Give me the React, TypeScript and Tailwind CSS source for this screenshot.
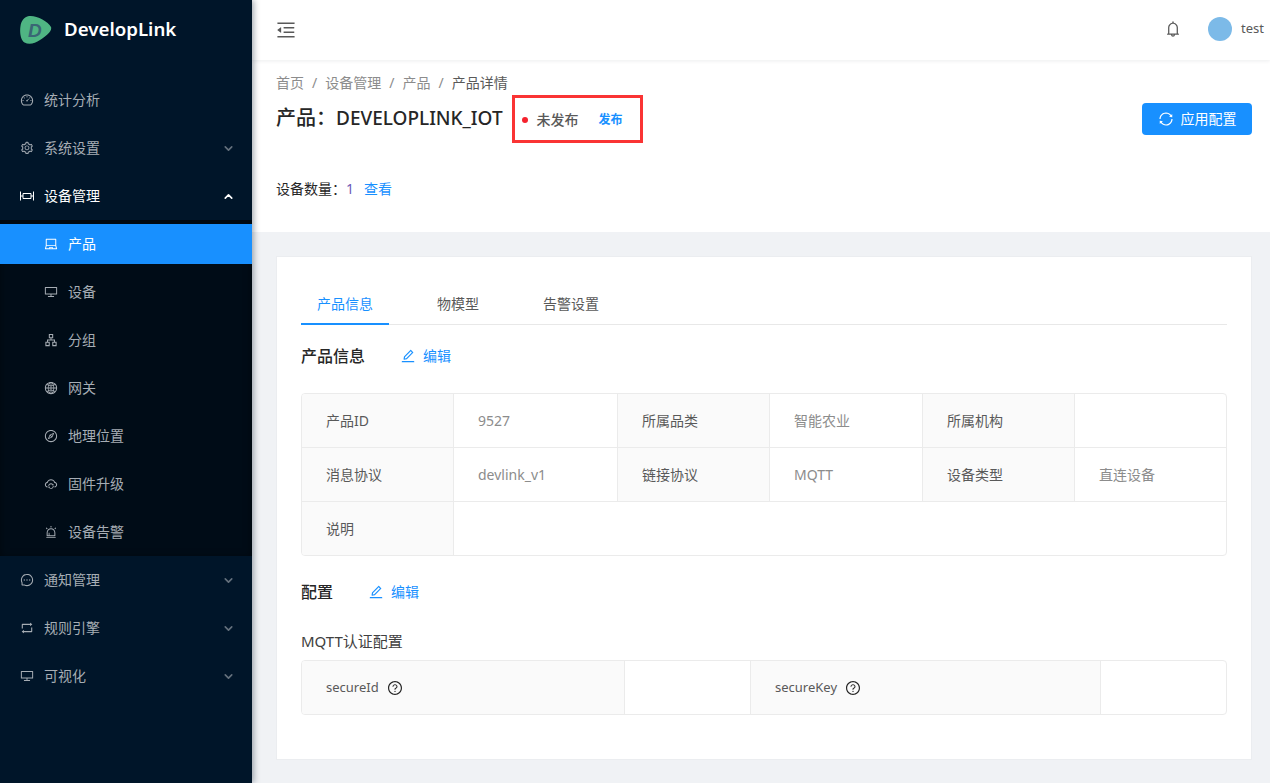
import type { ReactNode } from 'react';
import {
  AiOutlineAlert,
  AiOutlineApartment,
  AiOutlineBell,
  AiOutlineCloudSync,
  AiOutlineCompass,
  AiOutlineDashboard,
  AiOutlineDesktop,
  AiOutlineEdit,
  AiOutlineGlobal,
  AiOutlineLaptop,
  AiOutlineMenuFold,
  AiOutlineMessage,
  AiOutlineQuestionCircle,
  AiOutlineRetweet,
  AiOutlineSetting,
  AiOutlineSync,
} from 'react-icons/ai';
import { LuChevronDown, LuChevronUp } from 'react-icons/lu';

const fontStack =
  "font-['Noto_Sans','Noto_Sans_CJK_SC','Liberation_Sans',sans-serif]";

function DeviceIcon() {
  return (
    <svg width="14" height="14" viewBox="0 0 14 14" fill="none" stroke="currentColor">
      <path d="M.5 2.500v9M13.500 2.500v9M3 4.500h8v5H3zM.5 7H3M11 7h2.500" />
    </svg>
  );
}

function Logo() {
  return (
    <svg width="33" height="30" viewBox="0 0 33 30">
      <path
        d="M10 1C17 0 29 6 32 12c1.500 4-5 9-11 13-5 3.500-11 5-15.500 2.500C1.500 25 .5 17 1.500 11 2.200 6 5 2 10 1z"
        fill="#4fb583"
      />
      <text
        x="9"
        y="22"
        fontSize="19"
        fontWeight="700"
        fontStyle="italic"
        fill="#3a6675"
        fontFamily="Liberation Sans, sans-serif"
      >
        D
      </text>
    </svg>
  );
}

function MenuRow({
  icon,
  label,
  arrow,
  open = false,
}: {
  icon: ReactNode;
  label: string;
  arrow?: 'up' | 'down';
  open?: boolean;
}) {
  return (
    <div
      className={[
        'my-1 flex h-10 items-center pl-5 pr-[17px] text-sm',
        open ? 'text-white' : 'text-[#a6adb4]',
      ].join(' ')}
    >
      <span className="mr-[10px] flex w-[14px] justify-center text-base">{icon}</span>
      <span className="flex-1">{label}</span>
      {arrow === 'down' && <LuChevronDown size={13} strokeWidth={3} className="opacity-60" />}
      {arrow === 'up' && <LuChevronUp size={13} strokeWidth={3} />}
    </div>
  );
}

function SubRow({
  icon,
  label,
  active = false,
}: {
  icon: ReactNode;
  label: string;
  active?: boolean;
}) {
  return (
    <div
      className={[
        'my-1 flex h-10 items-center pl-11 text-sm',
        active ? 'bg-[#1890ff] text-white' : 'text-[#a6adb4]',
      ].join(' ')}
    >
      <span className="mr-[10px] flex w-[14px] justify-center text-base">{icon}</span>
      <span>{label}</span>
    </div>
  );
}

function Sidebar() {
  return (
    <aside className="z-10 w-[252px] shrink-0 bg-[#001529] shadow-[2px_0_6px_rgba(0,21,41,0.35)]">
      <div className="flex h-[60px] items-center pl-[19px]">
        <Logo />
        <span className="mb-[2px] ml-3 text-[18.7px] font-semibold text-white">DevelopLink</span>
      </div>
      <nav className="flex flex-col pt-4">
        <MenuRow icon={<AiOutlineDashboard />} label="统计分析" />
        <MenuRow icon={<AiOutlineSetting />} label="系统设置" arrow="down" />
        <MenuRow icon={<DeviceIcon />} label="设备管理" arrow="up" open />
        <div className="flex flex-col bg-[#000c17] shadow-[inset_0_2px_8px_rgba(0,0,0,0.45)]">
          <SubRow icon={<AiOutlineLaptop />} label="产品" active />
          <SubRow icon={<AiOutlineDesktop />} label="设备" />
          <SubRow icon={<AiOutlineApartment size={14} />} label="分组" />
          <SubRow icon={<AiOutlineGlobal />} label="网关" />
          <SubRow icon={<AiOutlineCompass />} label="地理位置" />
          <SubRow icon={<AiOutlineCloudSync />} label="固件升级" />
          <SubRow icon={<AiOutlineAlert />} label="设备告警" />
        </div>
        <MenuRow icon={<AiOutlineMessage />} label="通知管理" arrow="down" />
        <MenuRow icon={<AiOutlineRetweet />} label="规则引擎" arrow="down" />
        <MenuRow icon={<AiOutlineDesktop />} label="可视化" arrow="down" />
      </nav>
    </aside>
  );
}

function TopBar() {
  return (
    <header className="z-[5] flex h-[60px] shrink-0 items-center bg-white pl-[23px] pr-[6px] shadow-[0_1px_4px_rgba(0,21,41,0.08)]">
      <AiOutlineMenuFold size={22} className="text-[#595959]" />
      <div className="flex-1" />
      <AiOutlineBell size={18} className="mb-[2px] mr-[26px] text-[#595959]" />
      <span className="mb-[2px] mr-[9px] size-6 rounded-full bg-[#7cbae8]" />
      <span className="mb-[2px] text-[13px] text-[#595959]">test</span>
    </header>
  );
}

function PageHeader() {
  return (
    <section className="h-[172px] shrink-0 bg-white pl-6 pr-[18px] pt-3">
      <div className="flex h-[22px] items-center text-sm leading-[22px] text-[#8c8c8c]">
        <span>首页</span>
        <span className="mx-2">/</span>
        <span>设备管理</span>
        <span className="mx-2">/</span>
        <span>产品</span>
        <span className="mx-2">/</span>
        <span className="text-[#595959]">产品详情</span>
      </div>
      <div className="mt-[1px] flex h-12 items-center">
        <h1 className="mb-[2px] text-xl font-medium text-[#262626]">
          产品：<span className="text-[19px]">DEVELOPLINK_IOT</span>
        </h1>
        <div className="ml-[9px] flex h-12 w-[131px] items-center border-[3px] border-[#fa3434] pl-[7px] pt-[2px] text-sm font-medium">
          <span className="mr-[9px] size-[6px] rounded-full bg-[#f5222d]" />
          <span className="text-[#595959]">未发布</span>
          <span className="ml-[20px] text-xs font-semibold text-[#1890ff]">发布</span>
        </div>
        <div className="flex-1" />
        <button className="flex h-8 w-[110px] items-center justify-center rounded bg-[#1890ff] text-sm text-white">
          <AiOutlineSync size={16} className="mr-[7px]" />
          应用配置
        </button>
      </div>
      <div className="mt-[35px] flex h-[22px] items-center text-sm text-[#262626]">
        设备数量：
        <span className="text-[#6d57b8]">1</span>
        <span className="ml-[10px] text-[#1890ff]">查看</span>
      </div>
    </section>
  );
}

function Label({ children }: { children: ReactNode }) {
  return (
    <div className="flex items-center border-r border-[#ebebeb] bg-[#fafafa] pl-6 text-sm text-[#595959]">
      {children}
    </div>
  );
}

function Value({ children, last = false }: { children?: ReactNode; last?: boolean }) {
  return (
    <div
      className={[
        'flex items-center border-[#ebebeb] pl-6 text-sm text-[#8c8c8c]',
        last ? '' : 'border-r',
      ].join(' ')}
    >
      {children}
    </div>
  );
}

function SectionTitle({ title }: { title: string }) {
  return (
    <div className="flex items-center">
      <h2 className="mr-[35px] text-base font-medium text-[#262626]">{title}</h2>
      <span className="flex items-center text-sm text-[#1890ff]">
        <AiOutlineEdit size={16} className="mr-[7px]" />
        编辑
      </span>
    </div>
  );
}

function ProductCard() {
  return (
    <section className="ml-6 mr-[18px] mt-6 h-[504px] border border-[#ebedf0] bg-white px-6 pt-[30px]">
      <div className="flex h-[38px] border-b border-[#e8e8e8] text-sm text-[#595959]">
        <span className="-mb-px flex w-[88px] justify-center border-b-2 border-[#1890ff] pt-[7px] text-[#1890ff]">
          产品信息
        </span>
        <span className="ml-[48px] pt-[7px]">物模型</span>
        <span className="ml-[64px] pt-[7px]">告警设置</span>
      </div>
      <div className="mt-[19px]">
        <SectionTitle title="产品信息" />
      </div>
      <div className="mt-[25px] grid h-[163px] grid-cols-[152px_164px_152px_153px_152px_1fr] grid-rows-[54px_54px_53px] overflow-hidden rounded border border-[#ebebeb] [&>*:nth-child(-n+12)]:border-b">
        <Label>产品ID</Label>
        <Value>9527</Value>
        <Label>所属品类</Label>
        <Value>智能农业</Value>
        <Label>所属机构</Label>
        <Value last />
        <Label>消息协议</Label>
        <Value>devlink_v1</Value>
        <Label>链接协议</Label>
        <Value>MQTT</Value>
        <Label>设备类型</Label>
        <Value last>直连设备</Value>
        <Label>说明</Label>
        <div className="col-span-5" />
      </div>
      <div className="mt-6">
        <SectionTitle title="配置" />
      </div>
      <h3 className="mt-[26px] text-[15px] text-[#404040]">MQTT认证配置</h3>
      <div className="mt-[7px] grid h-[55px] grid-cols-[323px_126px_350px_1fr] overflow-hidden rounded border border-[#ebebeb]">
        <Label>
          <span className="text-[13px]">secureId</span>
          <AiOutlineQuestionCircle size={16} className="ml-[8px] mt-[2px] text-[#262626]" />
        </Label>
        <Value />
        <Label>
          <span className="text-[13px]">secureKey</span>
          <AiOutlineQuestionCircle size={16} className="ml-[8px] mt-[2px] text-[#262626]" />
        </Label>
        <Value last />
      </div>
    </section>
  );
}

export default function App() {
  return (
    <div className={`flex h-screen overflow-hidden bg-[#f0f2f5] ${fontStack}`}>
      <Sidebar />
      <main className="flex min-w-0 flex-1 flex-col">
        <TopBar />
        <PageHeader />
        <ProductCard />
      </main>
    </div>
  );
}
